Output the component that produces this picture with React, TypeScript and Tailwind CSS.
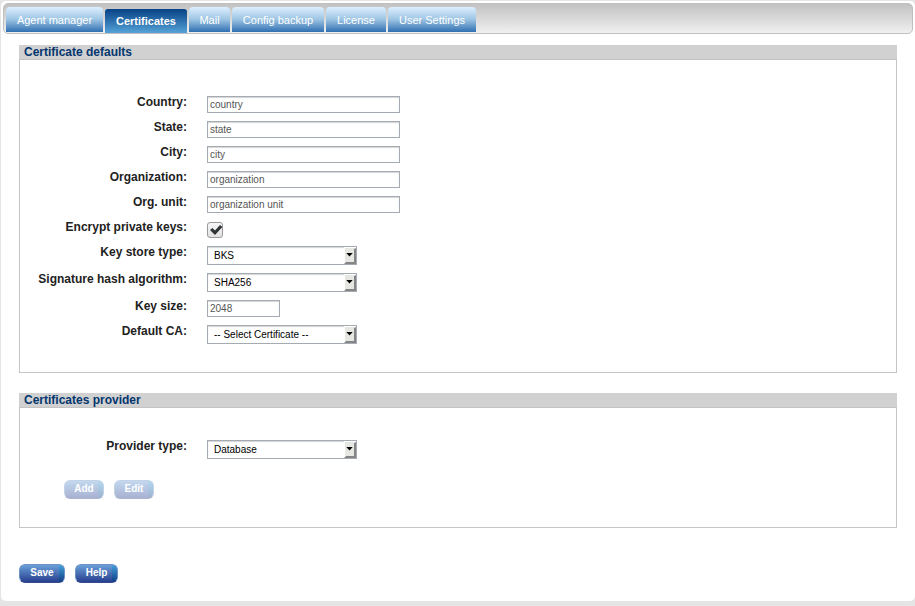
import React, { useState } from "react";

const tabs = [
  { name: "Agent manager", width: "w-[97px]" },
  { name: "Certificates", width: "w-[82px]" },
  { name: "Mail", width: "w-[41px]" },
  { name: "Config backup", width: "w-[92px]" },
  { name: "License", width: "w-[60px]" },
  { name: "User Settings", width: "w-[88px]" },
];

const inputClass =
  "block h-[17px] border border-[#a4abb2] bg-white px-[2px] text-[10px] leading-[15px] text-[#555] shadow-[inset_0_1px_1px_#d4d4d4] outline-none";

function Row({ id, label, tall, children }: any) {
  return (
    <div className={tall ? "flex h-[27px] items-start gap-5" : "flex h-[25px] items-start gap-5"}>
      <label
        htmlFor={id}
        className="w-[167px] shrink-0 whitespace-nowrap text-right text-xs font-bold leading-[13px] text-[#222]"
      >
        {label}:
      </label>
      {children}
    </div>
  );
}

function TextRow({ id, label, value, small }: any) {
  return (
    <Row id={id} label={label}>
      <input id={id} type="text" defaultValue={value} className={`${inputClass} ${small ? "w-[73px]" : "w-[193px]"}`} />
    </Row>
  );
}

function SelectRow({ id, label, options }: any) {
  return (
    <Row id={id} label={label} tall>
      <div className="relative">
        <select
          id={id}
          className="block h-[19px] w-[150px] appearance-none border border-[#a4abb2] bg-white pl-[6px] pr-4 text-[10px] leading-[17px] text-black shadow-[inset_0_1px_1px_#d4d4d4] outline-none"
        >
          {options.map((option: string) => (
            <option key={option}>{option}</option>
          ))}
        </select>
        <svg className="pointer-events-none absolute right-px top-px" width="12" height="17" viewBox="0 0 12 17">
          <path d="M0 0H12V17H0Z" fill="#fff" />
          <path d="M1 1H10V15H1Z" fill="#e6e6e3" />
          <path d="M12 1V17H0L2 15H10V2Z" fill="#858585" />
          <path d="M2.3 6H8.7L5.5 9.6Z" fill="#000" />
        </svg>
      </div>
    </Row>
  );
}

function Section({ title, children }: any) {
  return (
    <section>
      <h2 className="h-[15px] border-b border-[#c3c3c3] bg-[#d1d1d1] px-[5px] text-xs font-bold leading-[14px] text-[#03366e]">
        {title}
      </h2>
      <div className="border-x border-b border-[#c5c5c5]">{children}</div>
    </section>
  );
}

function Button({ disabled, width, children }: any) {
  return (
    <button
      type="button"
      disabled={disabled}
      className={`relative h-[19px] overflow-hidden rounded-md border border-[#6c93c4] border-b-[#314c8d] bg-linear-to-b from-[#6b9fd8] to-[#293f8e] text-center text-[10px] font-bold leading-[16px] text-white disabled:opacity-40 ${width}`}
    >
      <span className="absolute inset-y-0 right-0 w-[5px] bg-linear-to-b from-[#45a1d9] to-[#123f86]" />
      <span className="relative block pb-px">{children}</span>
    </button>
  );
}

function App() {
  const [active, setActive] = useState<string>("Certificates");
  const [encrypt, setEncrypt] = useState<boolean>(true);

  return (
    <div className="min-h-screen bg-[#e5e5e5] pl-px pt-px font-['Liberation_Sans',Arial,sans-serif]">
      <div className="rounded-[5px] bg-white pb-[18px]">
        <div className="px-[2px] pt-[2px]">
          <nav className="flex h-[31px] gap-[2px] rounded-[5px] border border-[#c0c0c0] bg-linear-to-b from-[#c2c2c2] to-[#f0f0f0] pl-[2px] pt-[3px]">
            {tabs.map(({ name, width }) =>
              name === active ? (
                <button
                  key={name}
                  type="button"
                  className={`relative top-[2px] h-[24px] whitespace-nowrap rounded-t-[3px] bg-linear-to-b from-[#064185] to-[#55a3d8] text-center text-[11px] font-bold leading-[22px] text-white ${width}`}
                >
                  {name}
                </button>
              ) : (
                <button
                  key={name}
                  type="button"
                  onClick={() => setActive(name)}
                  className={`h-[25px] whitespace-nowrap rounded-t-[4px] bg-linear-to-b from-[#def0ff] via-[#9cc4e3] to-[#2f70b1] text-center text-[11px] leading-[26px] text-white ${width}`}
                >
                  {name}
                </button>
              )
            )}
          </nav>
        </div>

        <main className="px-[18px] pt-[11px]">
          <Section title="Certificate defaults">
            <div className="pb-5 pt-9">
              <TextRow id="country" label="Country" value="country" />
              <TextRow id="state" label="State" value="state" />
              <TextRow id="city" label="City" value="city" />
              <TextRow id="organization" label="Organization" value="organization" />
              <TextRow id="unit" label="Org. unit" value="organization unit" />
              <Row id="encrypt" label="Encrypt private keys">
                <div className="relative mt-px size-4">
                  <input
                    id="encrypt"
                    type="checkbox"
                    checked={encrypt}
                    onChange={() => setEncrypt(!encrypt)}
                    className="block size-4 appearance-none rounded-[3px] border border-[#999] bg-linear-to-b from-[#f6f6f6] to-[#e2e2e2]"
                  />
                  {encrypt ? (
                    <svg className="pointer-events-none absolute inset-0" width="16" height="16" viewBox="0 0 16 16">
                      <path d="M3 8L5.4 6L8 8.4L13 3L15.4 5L8 13Z" fill="#2e3436" />
                    </svg>
                  ) : null}
                </div>
              </Row>
              <SelectRow id="keyStore" label="Key store type" options={["BKS", "JKS"]} />
              <SelectRow id="hash" label="Signature hash algorithm" options={["SHA256", "SHA512"]} />
              <TextRow id="keySize" label="Key size" value="2048" small />
              <SelectRow id="defaultCa" label="Default CA" options={["-- Select Certificate --"]} />
            </div>
          </Section>

          <div className="mt-5">
            <Section title="Certificates provider">
              <div className="pb-7 pt-8">
                <SelectRow id="provider" label="Provider type" options={["Database"]} />
                <div className="flex gap-[10px] pl-11 pt-[13px]">
                  <Button width="w-10" disabled>Add</Button>
                  <Button width="w-10" disabled>Edit</Button>
                </div>
              </div>
            </Section>
          </div>

          <div className="mt-9 flex gap-[10px]">
            <Button width="w-[46px]">Save</Button>
            <Button width="w-[43px]">Help</Button>
          </div>
        </main>
      </div>
    </div>
  );
}

export default App;
